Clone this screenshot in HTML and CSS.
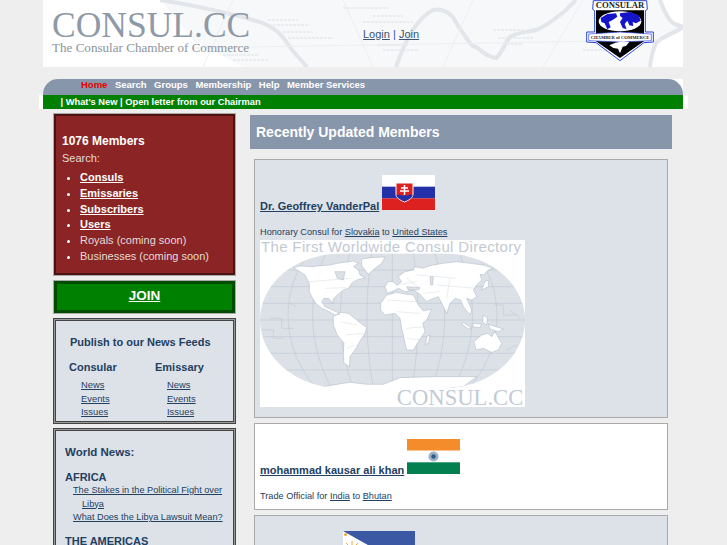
FILE: index.html
```html
<!DOCTYPE html>
<html lang="en">
<head>
<meta charset="utf-8">
<title>CONSUL.CC - The Consular Chamber of Commerce</title>
<link rel="stylesheet" href="styles.css">
</head>
<body>
<div class="page">
  <header class="header">
    <svg class="header-map" viewBox="0 0 640 67" aria-hidden="true">
      <path class="sea" d="M118 0H617L627 20L640 27L613 43L607 67H200L150 40Z"/>
      <path class="coast" d="M117 0C150 5 190 14 210 20C225 24 236 30 244 43C250 52 258 60 264 67"/>
      <path class="coast" d="M353 67C362 40 375 18 390 10C398 8 405 12 410 17C414 24 416 28 420 33C426 42 428 46 433 47C440 52 446 58 453 58C460 52 462 42 467 37C475 32 484 32 493 30C505 26 515 16 523 10C527 6 530 3 533 0"/>
      <path class="coast" d="M617 0C620 8 623 15 627 20C630 25 636 25 640 27C630 34 620 36 613 43C610 50 608 58 607 67"/>
      <path class="grid" d="M190 0L160 67M300 0L330 67M430 0L400 67M540 0L500 67M150 48L620 40"/>
      <path class="label" d="M225 20H255M230 25H265M240 32H270M245 38H290M300 8H345M320 22H370M330 16H360M335 45H365M340 50H375M450 30H480M455 38H490M460 44H480M180 55H215M190 60H225M560 10H590M570 20H600M540 50H580"/>
    </svg>
    <div class="brand">
      <div class="brand-name">CONSUL.CC</div>
      <div class="brand-tag">The Consular Chamber of Commerce</div>
    </div>
    <div class="auth"><a href="#">Login</a> <span class="auth-sep">|</span> <a href="#">Join</a></div>
    <svg class="crest" viewBox="48 0 204 186" role="img" aria-label="Consular Chamber of Commerce crest">
      <path class="crest-edge" d="M70 2H230L232 28L226 32V96H250V126L222 128L150 182L78 128L50 126V96H74V32L68 28Z"/>
      <path class="crest-black" d="M78 31H222V124L150 174L78 124Z"/>
      <ellipse class="crest-white" cx="150" cy="64" rx="64" ry="30"/>
      <path class="crest-blue" d="M92 54L112 42L138 40L142 50L128 60L116 66L122 82L112 88L104 70L94 66ZM150 40L180 36L206 46L212 62L198 70L188 66L190 78L178 76L172 62L164 72L170 88L158 84L150 66L158 54L150 48Z"/>
      <text class="crest-title" x="150" y="24" text-anchor="middle" textLength="146" lengthAdjust="spacingAndGlyphs">CONSULAR</text>
      <path class="crest-band" d="M56 102L150 96L244 102V122L150 126L56 122Z"/>
      <text class="crest-sub" x="150" y="116" text-anchor="middle" textLength="176" lengthAdjust="spacingAndGlyphs">CHAMBER of COMMERCE</text>
      <path class="crest-white" d="M118 136L136 128L160 124L178 126L168 138L158 140L150 160L144 146L130 144Z"/>
    </svg>
  </header>

  <div class="nav-wrap">
    <nav class="nav">
      <a class="nav-active" href="#">Home</a>
      <a href="#">Search</a>
      <a href="#">Groups</a>
      <a href="#">Membership</a>
      <a href="#">Help</a>
      <a href="#">Member Services</a>
    </nav>
  </div>
  <div class="subnav"><div class="subnav-bar">| What's New | Open letter from our Chairman</div></div>

  <div class="columns">
    <aside class="sidebar">
      <section class="members">
        <h2 class="members-count">1076 Members</h2>
        <div class="members-search">Search:</div>
        <ul class="members-list">
          <li><a href="#">Consuls</a></li>
          <li><a href="#">Emissaries</a></li>
          <li><a href="#">Subscribers</a></li>
          <li><a href="#">Users</a></li>
          <li>Royals (coming soon)</li>
          <li>Businesses (coming soon)</li>
        </ul>
      </section>
      <a class="join" href="#">JOIN</a>
      <section class="panel feeds">
        <h3 class="feeds-title">Publish to our News Feeds</h3>
        <div class="feeds-cols">
          <div class="feeds-col">
            <h4 class="feeds-head">Consular</h4>
            <a href="#">News</a><a href="#">Events</a><a href="#">Issues</a>
          </div>
          <div class="feeds-col">
            <h4 class="feeds-head">Emissary</h4>
            <a href="#">News</a><a href="#">Events</a><a href="#">Issues</a>
          </div>
        </div>
      </section>
      <section class="panel world">
        <h3 class="world-title">World News:</h3>
        <h4 class="world-region">AFRICA</h4>
        <a class="world-item" href="#">The Stakes in the Political Fight over Libya</a>
        <a class="world-item" href="#">What Does the Libya Lawsuit Mean?</a>
        <h4 class="world-region">THE AMERICAS</h4>
      </section>
    </aside>

    <main class="content">
      <h1 class="content-title">Recently Updated Members</h1>

      <article class="card">
        <div class="card-name"><a href="#">Dr. Geoffrey VanderPal</a>
          <svg class="flag" width="53" height="35" viewBox="0 0 53 35" role="img" aria-label="Flag of Slovakia">
            <rect width="53" height="11.7" fill="#fff"/>
            <rect y="11.7" width="53" height="11.7" fill="#2430a8"/>
            <rect y="23.4" width="53" height="11.6" fill="#dd2020"/>
            <path d="M14 8H31V19C31 23 27 25 22.500 27C18 25 14 23 14 19Z" fill="#dd2020" stroke="#fff"/>
            <path d="M14.500 20C17 18 20 22 22.500 20C25 22 28 18 30.500 20C30 23 26 25 22.500 26.500C19 25 15 23 14.500 20Z" fill="#2430a8"/>
            <path d="M22.500 10V20M19 13H26M18 16H27" stroke="#fff" stroke-width="1.500"/>
          </svg>
        </div>
        <p class="card-role">Honorary Consul for <a href="#">Slovakia</a> to <a href="#">United States</a></p>
        <svg class="world-map" viewBox="30 15 795 501" role="img" aria-label="World map">
          <defs><clipPath id="globe"><path d="M30 255C30 150 130 55 280 55H575C725 55 825 150 825 255C825 360 725 460 575 460H280C130 460 30 360 30 255Z"/></clipPath></defs>
          <rect x="30" y="15" width="795" height="501" fill="#fff"/>
          <text class="map-title" x="33" y="52" textLength="780" lengthAdjust="spacing">The First Worldwide Consul Directory</text>
          <g clip-path="url(#globe)">
            <rect x="30" y="55" width="795" height="405" fill="#dce1e8"/>
            <path class="map-line" d="M30 105H825M30 155H825M30 205H825M30 255H825M30 305H825M30 355H825M30 405H825"/>
            <path class="map-line" d="M427 55V460M365 55C345 190 345 320 370 460M300 55C260 190 260 320 310 460M225 60C170 190 175 330 245 460M160 80C90 190 100 340 190 450M490 55C510 190 510 320 485 460M555 55C595 190 595 320 545 460M630 60C685 190 680 330 610 460M695 80C765 190 755 340 665 450"/>
            <path class="map-land" d="M130 98L150 93L185 95L215 92L240 90L262 85L285 82L310 78L325 85L310 95L325 105L330 120L345 128L320 135L305 145L295 160L280 165L262 180L250 192L248 205L235 190L222 190L215 200L225 215L240 222L262 232L270 238L255 240L238 230L215 220L200 208L188 190L178 170L178 145L165 120L150 110ZM335 72L365 68L405 66L395 85L375 100L355 118L345 105L335 92ZM250 245L270 232L295 235L320 255L350 278L345 295L330 318L315 345L300 365L298 395L282 385L280 355L282 325L262 300L250 270ZM392 205L410 180L440 172L470 178L490 180L505 210L520 228L545 222L530 255L518 265L525 290L505 320L490 345L470 345L462 310L455 280L450 250L435 235L405 240L392 225ZM530 305L540 300L535 325L527 328ZM412 175L405 155L415 140L430 140L440 150L455 140L445 125L465 110L490 105L495 95L520 100L540 92L580 85L620 80L660 85L700 90L730 100L715 105L700 120L690 118L695 135L680 150L670 165L680 185L665 195L650 190L665 225L660 240L640 215L632 195L615 190L600 205L590 235L575 205L565 185L545 192L530 200L510 178L490 165L465 170L445 160L430 168ZM705 140L715 135L715 155L695 165ZM672 320L695 300L715 295L725 305L735 290L755 325L745 345L725 352L700 340L678 345ZM700 240L712 250L710 270L698 262ZM640 262L665 280L655 282L636 268ZM670 265L695 268L690 278L668 275ZM715 268L760 282L745 290L720 282ZM200 458L300 442L350 448L400 448L450 428L550 425L680 425L640 455L500 472L230 472Z"/>
            <path class="map-hole" d="M255 110L285 110L280 135L262 130ZM470 155L510 158L505 165L475 165ZM540 125L550 125L548 150L542 150Z"/>
            <path class="map-border" d="M178 140L300 130M225 160L290 158M220 190L245 200M270 260L320 270M285 300L340 295M290 340L315 330M410 195L500 200M440 230L510 235M470 280L525 275M470 310L510 315M500 120L620 130M560 150L680 160M600 130L590 190M470 130L510 160M440 150L500 140M520 175L570 170"/>
            <path class="map-dots" d="M60 250H95V280H130M35 285H70V310H100M730 210H760V240H800M780 225L810 250M770 345L800 330M120 205L140 215"/>
          </g>
          <text class="map-brand" x="820" y="510" text-anchor="end">CONSUL.CC</text>
        </svg>
      </article>

      <article class="card card-white">
        <div class="card-name"><a href="#">mohammad kausar ali khan</a>
          <svg class="flag" width="53" height="35" viewBox="0 0 53 35" role="img" aria-label="Flag of India">
            <rect width="53" height="11.700" fill="#f48c2c"/>
            <rect y="11.700" width="53" height="11.600" fill="#fff"/>
            <rect y="23.300" width="53" height="11.700" fill="#048050"/>
            <circle cx="26.500" cy="17.500" r="5" fill="#9db2c9"/>
            <circle cx="26.500" cy="17.500" r="2.200" fill="#2a5a8a"/>
          </svg>
        </div>
        <p class="card-role">Trade Official for <a href="#">India</a> to <a href="#">Bhutan</a></p>
      </article>

      <article class="card">
        <div class="card-name card-name-flagonly">
          <svg class="flag" width="72" height="36" viewBox="0 0 72 36" role="img" aria-label="Flag of the Philippines">
            <rect width="72" height="18" fill="#3b58a4"/>
            <rect y="18" width="72" height="18" fill="#d02030"/>
            <path d="M0 0L32 18L0 36Z" fill="#fff"/>
            <circle cx="9" cy="18" r="4" fill="#f0a830"/>
            <path d="M9 10V26M3 12L15 24M15 12L3 24" stroke="#f0a830"/>
            <circle cx="2.500" cy="3.500" r="1.500" fill="#f0a830"/>
          </svg>
        </div>
      </article>
    </main>
  </div>
</div>
</body>
</html>
```

FILE: styles.css
```css
html, body {
  margin: 0;
  height: 545px;
  overflow: hidden;
  background: #eeeeee;
}

body {
  font-family: "Liberation Sans", Arial, sans-serif;
  font-size: 11px;
  color: #23405f;
}

a {
  color: #23405f;
}

.page {
  width: 640px;
  margin-left: 43px;
}

/* Header */
.header {
  position: relative;
  display: grid;
  grid-template-columns: 320px 223px 68px;
  align-items: center;
  height: 67px;
  overflow: hidden;
  background: #fff;
}

.header-map {
  position: absolute;
  inset: 0;
  width: 640px;
  height: 67px;
}

.sea { fill: #f6f8f9; }
.coast { fill: none; stroke: #e2e5e9; stroke-width: 4; }
.grid { fill: none; stroke: #eceef1; stroke-width: 1; }
.label { fill: none; stroke: #e6e9ec; stroke-width: 1.500; stroke-dasharray: 3 1; }

.brand {
  position: relative;
  align-self: start;
  padding: 9px 0 0 9px;
  font-family: "Liberation Serif", "Times New Roman", serif;
  white-space: nowrap;
}

.brand-name {
  font-size: 35.500px;
  line-height: 32px;
  color: #8e9aa7;
}

.brand-tag {
  font-size: 13.100px;
  line-height: 13px;
  color: #8b949e;
}

.auth {
  position: relative;
  font-size: 11px;
  color: #2b55b0;
}

.auth a {
  color: #3c5675;
}

.crest {
  position: relative;
  width: 68px;
  height: 62px;
  align-self: start;
}

.crest-edge { fill: #fff; stroke: #2b45d8; stroke-width: 3; }
.crest-black { fill: #000; }
.crest-white { fill: #fff; }
.crest-blue { fill: #1414c8; }
.crest-title { font: bold 25px "Liberation Serif", serif; fill: #222; }
.crest-band { fill: #fff; stroke: #2b45d8; stroke-width: 2; }
.crest-sub { font: bold 12.500px "Liberation Serif", serif; fill: #222; }

/* Navigation */
.nav-wrap {
  margin-top: 12px;
  background: linear-gradient(to right, #eeeeee 50%, #ffffff 50%);
}

.nav {
  display: flex;
  box-sizing: border-box;
  gap: 7.500px;
  align-items: flex-start;
  height: 16px;
  padding-left: 38px;
  border-radius: 15px 15px 0 0;
  background: #8896ac;
  font-size: 9.500px;
  font-weight: bold;
  line-height: 12px;
}

.nav a {
  color: #fff;
  text-decoration: none;
}

.nav a.nav-active {
  color: #e60000;
}

.subnav {
  margin: 0 -5px 0 -4px;
  padding: 0 5px 0 4px;
  background: #fff;
}

.subnav-bar {
  height: 14px;
  padding-left: 17.500px;
  background: #008000;
  color: #fff;
  font-size: 9.300px;
  font-weight: bold;
  line-height: 14px;
}

/* Columns */
.columns {
  display: flex;
  gap: 14px;
  align-items: flex-start;
  padding: 5px 0 0 10px;
}

.sidebar {
  display: flex;
  flex: 0 0 183px;
  flex-direction: column;
  min-width: 0;
}

/* Members */
.members {
  box-sizing: border-box;
  height: 161px;
  margin: 0 1px 0 1px;
  padding: 18px 6px 0;
  border: 2px solid #4b1212;
  box-shadow: 0 0 0 1px #aaaaaa;
  background: #8b2525;
  color: #e2dada;
}

.members-count {
  margin: 0;
  font-size: 12px;
  line-height: 15px;
  color: #fff;
}

.members-search {
  margin-top: 1px;
  line-height: 16px;
}

.members-list {
  margin: 4px 0 0;
  padding-left: 18px;
  line-height: 15.800px;
}

.members-list li::marker {
  color: #fff;
}

.members-list a {
  font-weight: bold;
  color: #fff;
}

/* Join */
.join {
  box-sizing: border-box;
  display: block;
  height: 32px;
  margin: 6px 1px 0;
  border: 3px solid #004d00;
  box-shadow: 0 0 0 1px #aaaaaa;
  background: #008000;
  color: #fff;
  font-size: 13.500px;
  font-weight: bold;
  line-height: 24px;
  text-align: center;
}

/* Panels */
.panel {
  box-sizing: border-box;
  border: 1px solid #444;
  box-shadow: inset 0 0 0 1px #999, inset 0 0 0 2px #444;
  background: #dde2e9;
}

.feeds {
  height: 106px;
  margin-top: 5px;
  padding: 16px 0 0 15px;
}

.feeds-title {
  margin: 0 0 0 1px;
  font-size: 11px;
  line-height: 14px;
}

.feeds-cols {
  display: flex;
  margin-top: 11px;
}

.feeds-col {
  display: flex;
  flex: 0 0 86px;
  flex-direction: column;
  align-items: flex-start;
  padding-left: 12px;
  box-sizing: border-box;
  font-size: 9.400px;
  line-height: 13.500px;
}

.feeds-col:last-child {
  flex-basis: 79px;
}

.feeds-head {
  margin: 0 0 4px -12px;
  font-size: 11px;
  line-height: 14px;
}

.world {
  height: 200px;
  margin-top: 4px;
  padding: 16px 6px 0 11px;
}

.world-title {
  margin: 0 0 11px;
  font-size: 11.500px;
  line-height: 14px;
}

.world-region {
  margin: 0;
  font-size: 11px;
  line-height: 14px;
}

.world-item {
  display: block;
  margin: 0 0 0 17px;
  font-size: 9.200px;
  line-height: 13.500px;
  text-indent: -9px;
}

.world-item:last-of-type {
  margin-bottom: 9px;
}

/* Content */
.content {
  flex: 0 0 422px;
  margin-top: 1px;
}

.content-title {
  height: 34px;
  margin: 0 0 10px;
  padding-left: 6px;
  background: #8896ac;
  color: #fff;
  font-size: 14px;
  line-height: 34px;
}

.card {
  box-sizing: border-box;
  width: 414px;
  margin: 0 0 5px 4px;
  padding: 15px 5px 10px;
  border: 1px solid #aaaaaa;
  background: #dde2e9;
}

.card-white {
  padding-bottom: 6px;
  background: #fff;
}

.card-name {
  font-size: 11px;
  font-weight: bold;
  line-height: 14px;
}

.card-name-flagonly {
  padding-left: 83px;
}

.flag {
  vertical-align: baseline;
}

.card-role {
  margin: 13px 0 0;
  font-size: 9.200px;
  line-height: 13px;
}

.world-map {
  display: block;
  width: 265px;
  height: 167px;
  margin-top: 1px;
}

.map-title {
  font-size: 45px;
  fill: #c3cad4;
  font-family: "Liberation Sans", sans-serif;
}

.map-land { fill: #fff; stroke: #8c99a8; stroke-width: 1; }
.map-hole { fill: #dce1e8; stroke: #8c99a8; stroke-width: 1; }
.map-line { fill: none; stroke: #b9c1cc; stroke-width: 1.500; }
.map-border { fill: none; stroke: #c0c7d0; stroke-width: 1; }
.map-dots { fill: none; stroke: #aab3bf; stroke-width: 1; }

.map-brand {
  font-family: "Liberation Serif", serif;
  font-size: 68px;
  fill: #c3cad4;
}
```
